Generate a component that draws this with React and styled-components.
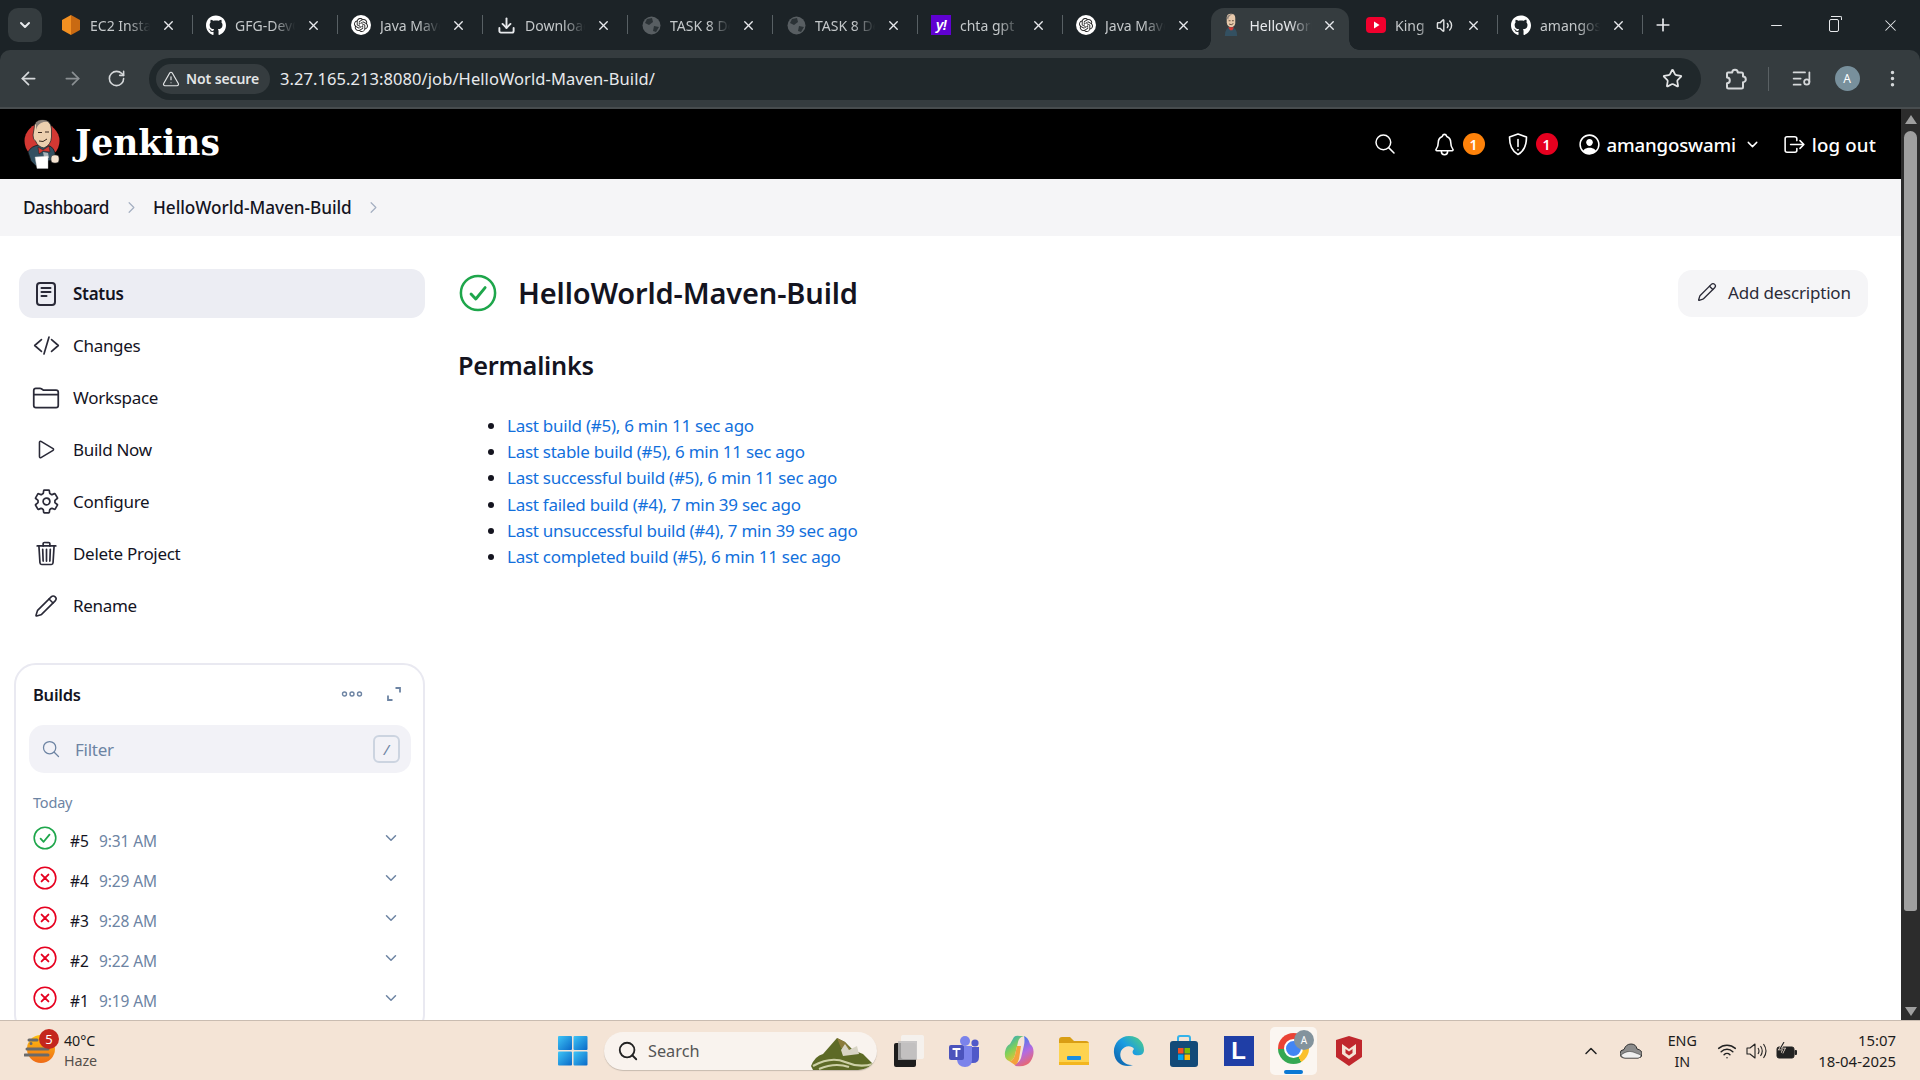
import React from "react";
import styled, { createGlobalStyle } from "styled-components";
import { ArrowLeft, ArrowRight, RotateCw, Star, ListMusic, EllipsisVertical, TriangleAlert, Plus, X, Minus, ChevronDown, ChevronRight, Search as SearchIcon, Volume2, Download, ChevronUp, Wifi, Pencil } from "lucide-react";
import { FaGithub } from "react-icons/fa";
import { SiOpenai } from "react-icons/si";
import { IoNotificationsOutline, IoPersonCircleOutline, IoLogOutOutline, IoSearchOutline, IoCodeSlashOutline, IoFolderOutline, IoPlayOutline, IoSettingsOutline, IoTrashOutline } from "react-icons/io5";

const UI = `"Noto Sans", "Open Sans", sans-serif`;

const Global = createGlobalStyle`
  html, body { margin: 0; padding: 0; background: #fff; }
  body { font-family: ${UI}; overflow: hidden; }
  * { box-sizing: border-box; }
`;

const Screen = styled.div`
  width: 1920px; height: 1080px; display: flex; flex-direction: column; overflow: hidden;
  background: #1c2327;
`;

/* ---------- tab strip ---------- */
const TabStrip = styled.div`
  height: 50px; flex: none; display: flex; align-items: flex-end; padding-left: 8px; color: #e3e5e6;
`;
const TabMenu = styled.div`
  width: 34px; height: 34px; margin: 0 5px 8px 0; border-radius: 10px; background: #353c3f;
  display: flex; align-items: center; justify-content: center; color: #e8eaed;
`;
const Tab = styled.div`
  width: ${p => (p.$active ? 138 : 145)}px; height: 42px; flex: none; display: flex; align-items: center; position: relative;
  margin: 0 ${p => (p.$active ? 3.5 : 0)}px;
  padding: 0 ${p => (p.$active ? 11 : 16)}px 8px ${p => (p.$active ? 10 : 14)}px;
  font-size: 14px; color: ${p => (p.$active ? "#e8eaed" : "#c4c8ca")};
  background: ${p => (p.$active ? "#353c3f" : "transparent")};
  border-radius: ${p => (p.$active ? "13px 13px 0 0" : "0")};
  &::after {
    content: ""; position: absolute; right: -1px; top: 7px; height: 19px; width: 1px;
    background: ${p => (p.$sep ? "#586064" : "transparent")};
    ${p => p.$active && `
      top: auto; bottom: 0; right: -10px; width: 10px; height: 10px;
      background: radial-gradient(circle at 100% 0, transparent 9.5px, #353c3f 10px);
    `}
  }
  &::before {
    content: "";
    ${p => p.$active && `
      position: absolute; bottom: 0; left: -10px; width: 10px; height: 10px;
      background: radial-gradient(circle at 0 0, transparent 9.5px, #353c3f 10px);
    `}
  }
`;
const FavSlot = styled.div`
  width: 20px; height: 20px; flex: none; margin-right: 9px; display: flex; align-items: center; justify-content: center;
`;
const TabLabel = styled.div`
  flex: 1; min-width: 0; white-space: nowrap; overflow: hidden;
  -webkit-mask-image: linear-gradient(to right, #000 60%, transparent 94%);
  mask-image: linear-gradient(to right, #000 60%, transparent 94%);
`;
const TabClose = styled.div`
  flex: none; width: 16px; height: 16px; margin-left: 6px; display: flex; align-items: center; justify-content: center; color: #e8eaed;
`;
const TabAudio = styled.div`
  flex: none; width: 18px; display: flex; color: #dfe1e2; margin-left: 2px; margin-right: 5px;
`;
const NewTab = styled.div`
  width: 22px; height: 42px; margin-left: 10px; padding-bottom: 8px; display: flex; align-items: center; justify-content: center; color: #e8eaed;
`;
const WindowControls = styled.div`
  margin-left: auto; display: flex; align-self: stretch; align-items: center; padding-right: 1px;
`;
const WindowBtn = styled.div`
  width: 57px; display: flex; justify-content: center; color: #e8eaed;
`;
const RestoreGlyph = styled.div`
  width: 10px; height: 13px; border: 1.5px solid #e8eaed; border-radius: 2px; position: relative;
  &::before { content: ""; position: absolute; left: 1px; top: -4px; width: 10px; height: 3px; border: 1.5px solid #e8eaed; border-bottom: 0; border-left: 0; border-radius: 0 2px 0 0; }
`;

/* ---------- toolbar ---------- */
const Toolbar = styled.div`
  height: 59px; flex: none; display: flex; align-items: center; padding-left: 6px;
  background: #353c3f; border-radius: 10px 10px 0 0; border-bottom: 2px solid #484d4f; color: #e3e5e6;
`;
const NavBtn = styled.div`
  width: 44px; height: 40px; flex: none; display: flex; align-items: center; justify-content: center;
  color: ${p => (p.$dim ? "#8b9093" : "#d5d8da")};
`;
const AddressBar = styled.div`
  width: 1552px; height: 42px; margin-left: 11px; flex: none; border-radius: 21px; background: #20282b;
  display: flex; align-items: center; padding: 0 18px 0 7px;
`;
const SecurityChip = styled.div`
  height: 30px; width: 114px; border-radius: 15px; background: #353c3f; display: flex; align-items: center; gap: 6px;
  padding-left: 6px; font-size: 14px; font-weight: 600; color: #e3e5e6; white-space: nowrap; letter-spacing: -0.1px;
`;
const Url = styled.div`
  margin-left: 10px; font-size: 16.5px; color: #e8eaed; white-space: nowrap; letter-spacing: 0.07px; flex: 1;
`;
const ToolRight = styled.div`
  display: flex; align-items: center; margin-left: 14px;
`;
const ToolBtn = styled.div`
  width: 40px; height: 40px; flex: none; display: flex; align-items: center; justify-content: center; color: #d5d8da;
  margin-left: ${p => p.$ml || 0}px;
`;
const ToolSep = styled.div`
  width: 1px; height: 24px; background: #5a6164; margin-left: 13px;
`;
const Avatar = styled.div`
  width: 25px; height: 25px; border-radius: 50%; background: #78909c; color: #fff; font-size: 12px;
  display: flex; align-items: center; justify-content: center;
`;

/* ---------- jenkins page ---------- */
const Viewport = styled.div`
  flex: 1; min-height: 0; display: flex; background: #fff; overflow: hidden;
`;
const Page = styled.div`
  flex: 1; min-width: 0; display: flex; flex-direction: column; color: #14141f;
`;
const Header = styled.div`
  height: 70px; flex: none; background: #000; color: #fff; display: flex; align-items: center; padding: 0 25px 0 23px;
`;
const Brand = styled.div`
  display: flex; align-items: center; gap: 14px;
`;
const BrandWord = styled.div`
  font-family: "DejaVu Serif", "Liberation Serif", serif; font-weight: 700; font-size: 34.5px; letter-spacing: 0; color: #fff; line-height: 1; margin-top: -2px;
`;
const HeaderActions = styled.div`
  margin-left: auto; display: flex; align-items: center; color: #fff;
`;
const HeaderIcon = styled.div`
  display: flex; align-items: center; justify-content: center; width: 26px; flex: none; margin-left: ${p => p.$ml || 0}px;
`;
const CountBadge = styled.div`
  width: 22px; height: 22px; border-radius: 50%; background: ${p => p.$bg}; color: #fff; font-size: 14px; font-weight: 600;
  display: flex; align-items: center; justify-content: center; margin-left: 5px; flex: none;
`;
const HeaderText = styled.div`
  font-size: 18.7px; font-weight: 500; margin-left: ${p => p.$ml || 0}px; white-space: nowrap; letter-spacing: ${p => p.$ls ?? -0.2}px;
`;
const Breadcrumbs = styled.div`
  height: 57px; flex: none; background: #f5f5f7; display: flex; align-items: center; padding-left: 23px; font-size: 17.2px; font-weight: 500;
`;
const Crumb = styled.div` white-space: nowrap; letter-spacing: ${p => p.$ls}px; `;
const CrumbSep = styled.div`
  width: 44px; display: flex; justify-content: center; color: #a4afc1; flex: none;
`;
const Body = styled.div`
  flex: 1; min-height: 0; display: flex; padding: 33px 33px 0 14px; gap: 33px;
`;
const Side = styled.div`
  width: 411px; flex: none; display: flex; flex-direction: column;
`;
const Nav = styled.div`
  display: flex; flex-direction: column; gap: 3px; padding-left: 5px;
`;
const NavItem = styled.div`
  height: 49px; border-radius: 14px; display: flex; align-items: center; font-size: 17px; letter-spacing: -0.3px;
  font-weight: ${p => (p.$active ? 600 : 400)}; background: ${p => (p.$active ? "#ecedf3" : "transparent")};
  color: #14141f;
`;
const NavGlyph = styled.div`
  width: 54px; flex: none; display: flex; justify-content: center; color: #2a2a38;
`;
const BuildsCard = styled.div`
  margin-top: 33px; flex: none; border: 2px solid #e9e9f1; border-radius: 22px; padding: 0 12px 14px 13px;
`;
const CardHead = styled.div`
  height: 60px; display: flex; align-items: center; padding: 0 9px 2px 4px;
`;
const CardTitle = styled.div`
  font-size: 16.5px; font-weight: 600; flex: 1; letter-spacing: -0.25px;
`;
const CardTools = styled.div`
  display: flex; align-items: center; gap: 23px; color: #6d84a3;
`;
const FilterBox = styled.div`
  height: 48px; border-radius: 15px; background: #f2f2f7; display: flex; align-items: center; padding: 0 10px 0 12px; color: #6d84a3;
`;
const FilterText = styled.div`
  margin-left: 14px; flex: 1; font-size: 17px; color: #6d84a3; letter-spacing: -0.25px;
`;
const KeyHint = styled.div`
  width: 27px; height: 28px; border: 2px solid #ccd4e0; border-radius: 6px; display: flex; align-items: center; justify-content: center;
  font-size: 15px; color: #6d84a3; font-style: italic; margin-right: 1px;
`;
const DayLabel = styled.div`
  margin: 18px 0 0 4px; height: 22px; font-size: 14.5px; color: #6d84a3; display: flex; align-items: center; letter-spacing: -0.2px;
`;
const BuildList = styled.div`
  margin-top: 7px; display: flex; flex-direction: column; padding: 0 4px 0 4px;
`;
const BuildRow = styled.div`
  height: 40px; display: flex; align-items: center; font-size: 15.5px;
`;
const BuildIcon = styled.div`
  width: 26px; flex: none; display: flex; position: relative; top: -2px;
`;
const BuildNum = styled.div`
  margin-left: 11px; width: 29px; flex: none; color: #14141f; padding-top: 2px;
`;
const BuildTime = styled.div`
  color: #6d84a3; flex: 1; padding-top: 2px; letter-spacing: -0.1px;
`;
const BuildChevron = styled.div`
  color: #6d84a3; display: flex; position: relative; top: -2px; margin-right: 7px;
`;
const Main = styled.div`
  flex: 1; min-width: 0; display: flex; flex-direction: column;
`;
const TitleRow = styled.div`
  height: 48px; display: flex; align-items: center; padding-left: 1px;
`;
const Title = styled.h1`
  margin: 0 0 2px 21px; font-size: 29px; font-weight: 600; letter-spacing: -0.15px; color: #14141f;
`;
const AddDescription = styled.div`
  margin-left: auto; width: 190px; height: 47px; background: #f5f5f7; border-radius: 14px; display: flex; align-items: center; padding: 0 0 2px 19px;
  font-size: 17px; font-weight: 400; gap: 11px; color: #2b2b38; letter-spacing: -0.2px;
`;
const SectionTitle = styled.h2`
  margin: 29px 0 0; font-size: 25.3px; line-height: 38px; font-weight: 600; letter-spacing: -0.25px;
`;
const LinkList = styled.ul`
  margin: 29px 0 0; padding-left: 49px;
`;
const LinkItem = styled.li`
  height: 26.2px; line-height: 26.2px; font-size: 17px; letter-spacing: -0.26px; color: #14141f;
`;
const PermaLink = styled.a`
  color: #1270dc; text-decoration: none;
`;
const Scrollbar = styled.div`
  width: 19px; flex: none; background: #2c2c2c; display: flex; flex-direction: column; align-items: center; padding: 6px 0 4px;
`;
const ScrollArrow = styled.div`
  width: 0; height: 0; border-left: 6px solid transparent; border-right: 6px solid transparent;
  ${p => (p.$up ? "border-bottom: 9px solid #9f9f9f;" : "border-top: 9px solid #9f9f9f;")}
  flex: none;
`;
const ScrollThumb = styled.div`
  width: 13px; height: 780px; border-radius: 7px 7px 3px 3px; background: #9f9f9f; margin-top: 7px;
`;
const ScrollSpace = styled.div` flex: 1; `;

/* ---------- taskbar ---------- */
const Taskbar = styled.div`
  height: 60px; flex: none; background: #f4e4d6; border-top: 1px solid #c9bcb1; display: flex; align-items: center; position: relative; color: #1c1c1c;
`;
const Weather = styled.div`
  width: 558px; flex: none; display: flex; align-items: center; padding-left: 24px;
`;
const WeatherIcon = styled.div`
  width: 40px; height: 44px; flex: none; position: relative;
`;
const WeatherBadge = styled.div`
  position: absolute; left: 15px; top: 0; width: 20px; height: 20px; border-radius: 50%; background: #c4261d; color: #fff;
  font-size: 13px; display: flex; align-items: center; justify-content: center;
`;
const WeatherText = styled.div`
  font-size: 14.3px; line-height: 20px; letter-spacing: -0.1px;
`;
const Muted = styled.div` color: #55504b; `;
const StartGlyph = styled.div`
  width: 30px; flex: none; display: flex;
`;
const TaskSearch = styled.div`
  width: 273px; height: 38px; margin-left: 16px; flex: none; border-radius: 19px; background: #f9f3ee; box-shadow: 0 1px 1px #c7bbb0;
  display: flex; align-items: center; padding-left: 13px; font-size: 16.3px; color: #555; gap: 9px; position: relative; overflow: hidden;
`;
const SearchArt = styled.div`
  position: absolute; right: 2px; bottom: 0; display: flex;
`;
const Dock = styled.div`
  display: flex; align-items: center; margin-left: 4px; flex: none;
`;
const DockItem = styled.div`
  width: 55px; height: 50px; flex: none; display: flex; align-items: center; justify-content: center; position: relative;
`;
const DockActive = styled.div`
  width: 47px; height: 48px; border-radius: 5px; background: #fbf6f1; display: flex; align-items: center; justify-content: center; position: relative;
  &::after { content: ""; position: absolute; bottom: 1px; left: 14px; width: 19px; height: 4px; border-radius: 2px; background: #0a78d4; }
`;
const LBox = styled.div`
  width: 30px; height: 30px; background: #1f3ea6; color: #fff; font-family: "Liberation Sans", sans-serif; font-weight: 700; font-size: 24px;
  display: flex; align-items: center; justify-content: center;
`;
const ChromeBall = styled.div`
  width: 31px; height: 31px; border-radius: 50%; margin-top: -4px; display: flex; align-items: center; justify-content: center;
  background: conic-gradient(from 30deg, #fbc02d 0 120deg, #34a853 120deg 240deg, #ea4335 240deg 360deg);
  &::before { content: ""; width: 15px; height: 15px; border-radius: 50%; background: #4285f4; border: 2px solid #fff; }
`;
const ChromeProfile = styled.div`
  position: absolute; top: 3px; right: 3px; width: 20px; height: 20px; border-radius: 50%; background: #83939d; color: #fff; font-size: 10px;
  display: flex; align-items: center; justify-content: center;
`;
const Tray = styled.div`
  margin-left: auto; display: flex; align-items: center; padding-right: 24px; flex: none;
`;
const TrayIcon = styled.div`
  display: flex; justify-content: center; width: ${p => p.$w || 30}px; flex: none; margin-left: ${p => p.$ml || 0}px; color: #222;
`;
const TrayLang = styled.div`
  margin-left: 11px; width: 50px; text-align: center; font-size: 14.3px; line-height: 21px;
`;
const Clock = styled.div`
  margin-left: 16px; text-align: right; font-size: 14.9px; line-height: 21px; white-space: nowrap;
`;

/* ---------- drawings ---------- */
const JenkinsLogo = () => (
  <svg width="38" height="50" viewBox="0 0 38 50">
    <circle cx="19" cy="22" r="17.5" fill="#d33833" />
    <path d="M5 33 Q8 27 16 26 L27 27 Q31 29 32 34 L32 41 L24 42 L13 47 L8 42 Z" fill="#335061" stroke="#111" strokeWidth=".7" />
    <path d="M11 10 Q11 1 19.5 1 Q28 1 28.5 10 L28.5 18 Q28 26 21 29 Q15 28 12.5 22 Q10 21 10 16 Z" fill="#eccfae" stroke="#2a2a2a" strokeWidth=".8" />
    <path d="M13 3.5 Q19 -1 26 3 Q22 2 18 4 Q14 6 13 11 Z" fill="#8a8079" />
    <path d="M16 22 Q20 24 24 20" stroke="#3a2a20" strokeWidth="1" fill="none" />
    <path d="M15 13.5h4M22 13h4" stroke="#3a2a20" strokeWidth="1.1" />
    <path d="M15 28 L20 31 L26 27 L27 33 L20 32 L16 35 Z" fill="#d33833" stroke="#111" strokeWidth=".4" />
    <path d="M20 33 L25 34 L26 39 L21 38 Z" fill="#a8b4bb" />
    <path d="M12 38 L25 37 L25 49.5 L14 49.5 Z" fill="#fff" stroke="#bbb" strokeWidth=".4" />
    <rect x="28" y="36" width="8" height="8" rx="3" fill="#f4e3d0" stroke="#333" strokeWidth=".6" />
  </svg>
);
const StatusDoc = () => (
  <svg width="24" height="26" viewBox="0 0 24 26" fill="none" stroke="#2a2a38" strokeWidth="2" strokeLinecap="round">
    <rect x="3" y="2" width="18" height="22" rx="3" />
    <path d="M7.5 7h9M7.5 11h9M7.5 15h5" />
  </svg>
);
const StatusCircle = ({ size, ok }) => {
  const c = ok ? "#1ea64b" : "#e6001f";
  return (
    <svg width={size} height={size} viewBox="0 0 24 24" fill="none" stroke={c} strokeLinecap="round" strokeLinejoin="round">
      <circle cx="12" cy="12" r="10.8" strokeWidth="1.6" />
      {ok ? <path d="M7.6 12.6 L10.6 15.8 L16.5 8.6" strokeWidth="1.8" /> : <path d="M8.6 8.6 L15.4 15.4 M15.4 8.6 L8.6 15.4" strokeWidth="1.9" />}
    </svg>
  );
};
const ExpandGlyph = () => (
  <svg width="16" height="16" viewBox="0 0 16 16" fill="none" stroke="#6d84a3" strokeWidth="1.8">
    <path d="M9.5 2H14V6.5M6.5 14H2V9.5" />
  </svg>
);
const DotsGlyph = () => (
  <svg width="22" height="8" viewBox="0 0 22 8" fill="none" stroke="#6d84a3" strokeWidth="1.4">
    <circle cx="3.5" cy="4" r="2" /><circle cx="11" cy="4" r="2" /><circle cx="18.5" cy="4" r="2" />
  </svg>
);
const ShieldGlyph = () => (
  <svg width="24" height="24" viewBox="0 0 24 24" fill="none" stroke="#fff" strokeWidth="1.6" strokeLinejoin="round" strokeLinecap="round">
    <path d="M12 2 L20.5 5 Q20.5 18 12 22.5 Q3.5 18 3.5 5 Z" />
    <path d="M12 7.5v7M12 17.5v.4" />
  </svg>
);
const ExtensionGlyph = () => (
  <svg width="24" height="24" viewBox="0 0 24 24" fill="none" stroke="#d5d8da" strokeWidth="2" strokeLinejoin="round">
    <path d="M5 5.5 H9.2 A2.8 2.8 0 0 1 14.8 5.5 H18.5 A1.5 1.5 0 0 1 20 7 V9.6 A2.8 2.8 0 0 1 20 15.2 V20 A1.5 1.5 0 0 1 18.5 21.5 H5.5 A1.5 1.5 0 0 1 4 20 V16.2 A2.8 2.8 0 0 0 4 10.6 V6.5 A1 1 0 0 1 5 5.5 Z" />
  </svg>
);
const AwsFav = () => (
  <svg width="20" height="22" viewBox="0 0 20 22">
    <path d="M10 1 L19 6 V16 L10 21 Z" fill="#c96a12" />
    <path d="M10 1 L1 6 V16 L10 21 Z" fill="#f39021" />
  </svg>
);
const GlobeFav = () => (
  <svg width="19" height="19" viewBox="0 0 19 19">
    <circle cx="9.5" cy="9.5" r="9" fill="#585e62" />
    <path d="M5 3 L10 2 L11 6 L7 9 L3 7 Z M12 10 L17 11 L14 16 L11 15 Z" fill="#2b3236" />
  </svg>
);
const OpenAiFav = () => (
  <FavDisc><SiOpenai size={14} color="#222" /></FavDisc>
);
const FavDisc = styled.div`
  width: 20px; height: 20px; border-radius: 50%; background: #fff; display: flex; align-items: center; justify-content: center;
`;
const YahooFav = styled.div`
  width: 20px; height: 20px; background: #6001d2; color: #fff; font-size: 14px; font-weight: 700; font-family: "Liberation Sans", sans-serif; font-style: italic;
  display: flex; align-items: center; justify-content: center; letter-spacing: -1px;
`;
const YoutubeFav = () => (
  <svg width="20" height="16" viewBox="0 0 20 16">
    <rect width="20" height="16" rx="4" fill="#f1002d" /><path d="M8 4.5 L13.5 8 L8 11.5 Z" fill="#fff" />
  </svg>
);
const JenkinsFav = () => (
  <svg width="18" height="24" viewBox="0 0 38 50">
    <path d="M6 48 Q6 30 19 29 Q32 30 32 48 Z" fill="#335061" />
    <path d="M10 9 Q10 1 19 1 Q28 1 28 10 L28 22 Q26 30 19 30 Q11 28 10 20 Z" fill="#e7c9ab" />
    <path d="M10 10 Q12 2 24 2 Q14 4 13 14 Z" fill="#8a8079" />
    <path d="M14 16h4M21 16h4M15 23q5 3 9-1" stroke="#3a2a20" strokeWidth="1.6" fill="none" />
    <path d="M13 30 L25 30 L22 36 L17 36 Z" fill="#d33833" />
  </svg>
);
const WeatherArt = () => (
  <svg width="36" height="36" viewBox="0 0 36 36">
    <defs><linearGradient id="sun" x1="0" y1="0" x2="0" y2="1"><stop offset="0" stopColor="#ffc20e" /><stop offset="1" stopColor="#ee6a16" /></linearGradient></defs>
    <circle cx="17" cy="20" r="14" fill="url(#sun)" />
    <path d="M5 11h8M3 20h21M1 26h23M7 14.5h0" stroke="#6a6a6a" strokeWidth="3" strokeLinecap="round" />
  </svg>
);
const WinLogo = () => (
  <svg width="30" height="30" viewBox="0 0 30 30">
    <defs><linearGradient id="win" x1="0" y1="0" x2="1" y2="1"><stop offset="0" stopColor="#3ec5f6" /><stop offset="1" stopColor="#0a69c8" /></linearGradient></defs>
    <rect x="0" y="0" width="14" height="14" rx="1" fill="url(#win)" /><rect x="15.5" y="0" width="14" height="14" rx="1" fill="url(#win)" />
    <rect x="0" y="15.5" width="14" height="14" rx="1" fill="url(#win)" /><rect x="15.5" y="15.5" width="14" height="14" rx="1" fill="url(#win)" />
  </svg>
);
const MountainArt = () => (
  <svg width="64" height="34" viewBox="0 0 64 34">
    <path d="M0 30 Q4 20 12 18 L26 2 L34 6 L42 14 L52 18 L62 28 L64 34 L2 34 Z" fill="#5d6a26" />
    <path d="M26 2 L34 6 L40 14 L30 12 Z" fill="#8b7b3a" />
    <path d="M30 14 L34 8 L38 14 L46 10 L48 18 L32 20 Z" fill="#d8d4c4" />
    <path d="M2 30 Q20 20 34 26 T62 28" stroke="#cdd0a6" strokeWidth="2.2" fill="none" />
    <path d="M8 33 Q24 26 38 31" stroke="#cdd0a6" strokeWidth="2" fill="none" />
  </svg>
);
const CardsGlyph = () => (
  <svg width="32" height="32" viewBox="0 0 32 32">
    <rect x="1" y="8" width="22" height="24" rx="2" fill="#1d1d1d" />
    <rect x="8" y="0" width="23" height="24" rx="2" fill="#f5f3f1" opacity=".85" />
    <rect x="5" y="6" width="19" height="19" fill="#bdbcbb" opacity=".8" />
  </svg>
);
const TeamsGlyph = () => (
  <svg width="32" height="32" viewBox="0 0 32 32">
    <circle cx="17" cy="6" r="5" fill="#7b83eb" /><circle cx="27" cy="8" r="3.6" fill="#5059c9" />
    <path d="M21 12h10v10q0 6-6 6h-4z" fill="#5059c9" /><path d="M9 11h15v14q0 7-7 7t-8-7z" fill="#7b83eb" />
    <rect x="1" y="10" width="15" height="15" rx="2" fill="#4b53bc" />
    <path d="M4.5 14h8M8.5 14v8" stroke="#fff" strokeWidth="1.8" />
  </svg>
);
const CopilotGlyph = () => (
  <svg width="30" height="32" viewBox="0 0 30 32">
    <defs>
      <linearGradient id="co1" x1="0" y1="0" x2="0.6" y2="1"><stop offset="0" stopColor="#1b9de2" /><stop offset=".55" stopColor="#7fd05a" /><stop offset="1" stopColor="#f6c12c" /></linearGradient>
      <linearGradient id="co2" x1="0.3" y1="0" x2="0.7" y2="1"><stop offset="0" stopColor="#2f7df0" /><stop offset=".55" stopColor="#b46ae0" /><stop offset="1" stopColor="#f2685c" /></linearGradient>
    </defs>
    <path d="M10 2 Q12 0 16 1 L20 1 Q15 2 14 7 L11 20 Q9 27 5 26 Q0 24 1 17 Q2 11 6 9 Z" fill="url(#co1)" />
    <path d="M20 1 Q24 2 26 9 Q31 13 29 21 Q27 28 22 30 Q18 32 12 31 Q10 30 11 29 Q15 28 17 23 L20 10 Q21 5 20 1 Z" fill="url(#co2)" />
    <path d="M5 26 Q9 27 11 20 L13 11 L17 11 L15 24 Q13 30 11 30 Z" fill="#f4a13c" />
  </svg>
);
const FolderGlyph = () => (
  <svg width="30" height="28" viewBox="0 0 30 28">
    <path d="M0 3q0-3 3-3h8l4 4h12q3 0 3 3v3H0z" fill="#d99e14" />
    <path d="M0 6h30v20q0 2-2 2H2q-2 0-2-2z" fill="#fdd34f" />
    <rect x="8" y="19" width="14" height="4" rx="1" fill="#1b8ee0" /><rect x="0" y="25" width="30" height="3" fill="#f3b61f" />
  </svg>
);
const EdgeGlyph = () => (
  <svg width="32" height="32" viewBox="0 0 32 32">
    <defs><linearGradient id="ed" x1="0" y1="1" x2="1" y2="0"><stop offset="0" stopColor="#0c59a4" /><stop offset=".55" stopColor="#1b9de2" /><stop offset="1" stopColor="#55d47a" /></linearGradient></defs>
    <path d="M16 1 C26 1 31 8 31 15 C31 20 26 21 22 20 C19 19 19 16 21 14 C19 10 11 10 8 16 C5 24 12 31 20 30 C12 33 2 29 1 18 C0 9 7 1 16 1 Z" fill="url(#ed)" />
  </svg>
);
const StoreGlyph = () => (
  <svg width="30" height="32" viewBox="0 0 30 32">
    <path d="M9 7V3q0-2 2-2h8q2 0 2 2v4" fill="none" stroke="#35b3ea" strokeWidth="2" />
    <rect x="1" y="6" width="28" height="26" rx="3" fill="#134a78" />
    <rect x="9" y="13" width="5.5" height="5.5" fill="#f25022" /><rect x="15.5" y="13" width="5.5" height="5.5" fill="#7fba00" />
    <rect x="9" y="19.5" width="5.5" height="5.5" fill="#00a4ef" /><rect x="15.5" y="19.5" width="5.5" height="5.5" fill="#ffb900" />
  </svg>
);
const McAfeeGlyph = () => (
  <svg width="28" height="30" viewBox="0 0 28 30">
    <path d="M1 4 L14 0 L27 4 V21 L14 30 L1 21 Z" fill="#c0272d" />
    <path d="M7 8 L14 13 L21 8 V18 L14 23 L7 18 Z" fill="#f4e4d6" />
    <path d="M10.5 13 L14 15.5 L17.5 13 V17 L14 19.5 L10.5 17 Z" fill="#c0272d" />
  </svg>
);
const CloudGlyph = () => (
  <svg width="22" height="16" viewBox="0 0 22 16">
    <path d="M5 15 Q0 15 0 10.5 Q0 7 4 6.5 Q6 1 11 1 Q16 1 17 6 Q22 7 22 11 Q22 15 18 15 Z" fill="#8c8c8c" stroke="#333" strokeWidth="1" />
    <path d="M1 12 Q7 7 13 9 L21 12 Q21 15 18 15 H5 Q2 15 1 12 Z" fill="#f0f0f0" stroke="#333" strokeWidth=".5" />
  </svg>
);
const BatteryGlyph = () => (
  <svg width="22" height="18" viewBox="0 0 22 18" fill="none">
    <rect x="1" y="5" width="17" height="11" rx="2" fill="#222" stroke="#222" />
    <rect x="18.5" y="8" width="2.5" height="5" rx="1" fill="#222" />
    <path d="M8 0 L4 7 H8 L6 11" stroke="#f4e4d6" strokeWidth="2.6" />
    <path d="M8 0 L4 7 H8 L6 11" stroke="#222" strokeWidth="1.1" />
  </svg>
);
const SpeakerGlyph = () => (
  <svg width="22" height="18" viewBox="0 0 22 18" fill="none" stroke="#222" strokeWidth="1.1" strokeLinejoin="round">
    <path d="M1 6h3l5-4v14l-5-4H1z" />
    <path d="M12 6q2 3 0 6M14.5 4q3.5 5 0 10M17.5 2q5 7 0 14" />
  </svg>
);

const tabs = [
  { k: "aws", label: "EC2 Instances", sep: true },
  { k: "gh", label: "GFG-DevOps", sep: true },
  { k: "ai", label: "Java Maven", sep: true },
  { k: "dl", label: "Downloads", sep: true },
  { k: "globe", label: "TASK 8 DevOps", sep: true },
  { k: "globe", label: "TASK 8 DevOps", sep: true },
  { k: "y", label: "chta gpt", sep: true },
  { k: "ai", label: "Java Maven" },
  { k: "jk", label: "HelloWorld", active: true },
  { k: "yt", label: "King", audio: true, sep: true },
  { k: "gh", label: "amangoswami", sep: true },
];
const Fav = ({ k }) => {
  if (k === "aws") return <AwsFav />;
  if (k === "gh") return <FaGithub size={21} color="#fff" />;
  if (k === "ai") return <OpenAiFav />;
  if (k === "dl") return <Download size={19} color="#e8eaed" strokeWidth={2.4} />;
  if (k === "globe") return <GlobeFav />;
  if (k === "y") return <YahooFav>y!</YahooFav>;
  if (k === "jk") return <JenkinsFav />;
  return <YoutubeFav />;
};

const navItems = [
  { label: "Status", icon: <StatusDoc />, active: true },
  { label: "Changes", icon: <IoCodeSlashOutline size={27} /> },
  { label: "Workspace", icon: <IoFolderOutline size={28} /> },
  { label: "Build Now", icon: <IoPlayOutline size={25} /> },
  { label: "Configure", icon: <IoSettingsOutline size={27} /> },
  { label: "Delete Project", icon: <IoTrashOutline size={27} /> },
  { label: "Rename", icon: <Pencil size={24} strokeWidth={1.6} /> },
];
const builds = [
  { n: "#5", t: "9:31 AM", ok: true },
  { n: "#4", t: "9:29 AM" },
  { n: "#3", t: "9:28 AM" },
  { n: "#2", t: "9:22 AM" },
  { n: "#1", t: "9:19 AM" },
];
const links = [
  "Last build (#5), 6 min 11 sec ago",
  "Last stable build (#5), 6 min 11 sec ago",
  "Last successful build (#5), 6 min 11 sec ago",
  "Last failed build (#4), 7 min 39 sec ago",
  "Last unsuccessful build (#4), 7 min 39 sec ago",
  "Last completed build (#5), 6 min 11 sec ago",
];

export default function App() {
  return (
    <Screen>
      <Global />
      <TabStrip>
        <TabMenu><ChevronDown size={16} strokeWidth={3} /></TabMenu>
        {tabs.map((t, i) => (
          <Tab key={i} $active={t.active} $sep={t.sep}>
            <FavSlot><Fav k={t.k} /></FavSlot>
            <TabLabel>{t.label}</TabLabel>
            {t.audio && <TabAudio><Volume2 size={17} /></TabAudio>}
            <TabClose><X size={15} strokeWidth={2.2} /></TabClose>
          </Tab>
        ))}
        <NewTab><Plus size={20} /></NewTab>
        <WindowControls>
          <WindowBtn><Minus size={17} strokeWidth={1.4} /></WindowBtn>
          <WindowBtn><RestoreGlyph /></WindowBtn>
          <WindowBtn><X size={19} strokeWidth={1.3} /></WindowBtn>
        </WindowControls>
      </TabStrip>
      <Toolbar>
        <NavBtn><ArrowLeft size={21} /></NavBtn>
        <NavBtn $dim><ArrowRight size={21} /></NavBtn>
        <NavBtn><RotateCw size={19} /></NavBtn>
        <AddressBar>
          <SecurityChip><TriangleAlert size={18} strokeWidth={1.6} />Not secure</SecurityChip>
          <Url>3.27.165.213:8080/job/HelloWorld-Maven-Build/</Url>
          <Star size={21} color="#e3e5e6" strokeWidth={2} />
        </AddressBar>
        <ToolRight>
          <ToolBtn><ExtensionGlyph /></ToolBtn>
          <ToolSep />
          <ToolBtn $ml={12}><ListMusic size={21} /></ToolBtn>
          <ToolBtn $ml={6}><Avatar>A</Avatar></ToolBtn>
          <ToolBtn $ml={5}><EllipsisVertical size={21} /></ToolBtn>
        </ToolRight>
      </Toolbar>
      <Viewport>
        <Page>
          <Header>
            <Brand>
              <JenkinsLogo />
              <BrandWord>Jenkins</BrandWord>
            </Brand>
            <HeaderActions>
              <HeaderIcon><IoSearchOutline size={24} /></HeaderIcon>
              <HeaderIcon $ml={34}><IoNotificationsOutline size={25} /></HeaderIcon>
              <CountBadge $bg="#fe820a">1</CountBadge>
              <HeaderIcon $ml={20}><ShieldGlyph /></HeaderIcon>
              <CountBadge $bg="#e6001f">1</CountBadge>
              <HeaderIcon $ml={19}><IoPersonCircleOutline size={25} /></HeaderIcon>
              <HeaderText $ml={4}>amangoswami</HeaderText>
              <HeaderIcon $ml={4}><ChevronDown size={17} /></HeaderIcon>
              <HeaderIcon $ml={16}><IoLogOutOutline size={25} /></HeaderIcon>
              <HeaderText $ml={4} $ls={0.15}>log out</HeaderText>
            </HeaderActions>
          </Header>
          <Breadcrumbs>
            <Crumb $ls={-0.45}>Dashboard</Crumb>
            <CrumbSep><ChevronRight size={19} strokeWidth={1.5} /></CrumbSep>
            <Crumb $ls={-0.05}>HelloWorld-Maven-Build</Crumb>
            <CrumbSep><ChevronRight size={19} strokeWidth={1.5} /></CrumbSep>
          </Breadcrumbs>
          <Body>
            <Side>
              <Nav>
                {navItems.map(n => (
                  <NavItem key={n.label} $active={n.active}>
                    <NavGlyph>{n.icon}</NavGlyph>
                    {n.label}
                  </NavItem>
                ))}
              </Nav>
              <BuildsCard>
                <CardHead>
                  <CardTitle>Builds</CardTitle>
                  <CardTools><DotsGlyph /><ExpandGlyph /></CardTools>
                </CardHead>
                <FilterBox>
                  <IoSearchOutline size={20} />
                  <FilterText>Filter</FilterText>
                  <KeyHint>/</KeyHint>
                </FilterBox>
                <DayLabel>Today</DayLabel>
                <BuildList>
                  {builds.map(b => (
                    <BuildRow key={b.n}>
                      <BuildIcon><StatusCircle size={24} ok={b.ok} /></BuildIcon>
                      <BuildNum>{b.n}</BuildNum>
                      <BuildTime>{b.t}</BuildTime>
                      <BuildChevron><ChevronDown size={18} strokeWidth={2} /></BuildChevron>
                    </BuildRow>
                  ))}
                </BuildList>
              </BuildsCard>
            </Side>
            <Main>
              <TitleRow>
                <StatusCircle size={38} ok />
                <Title>HelloWorld-Maven-Build</Title>
                <AddDescription><Pencil size={20} strokeWidth={1.6} />Add description</AddDescription>
              </TitleRow>
              <SectionTitle>Permalinks</SectionTitle>
              <LinkList>
                {links.map(l => (
                  <LinkItem key={l}><PermaLink href="#">{l}</PermaLink></LinkItem>
                ))}
              </LinkList>
            </Main>
          </Body>
        </Page>
        <Scrollbar>
          <ScrollArrow $up />
          <ScrollThumb />
          <ScrollSpace />
          <ScrollArrow />
        </Scrollbar>
      </Viewport>
      <Taskbar>
        <Weather>
          <WeatherIcon>
            <WeatherArt />
            <WeatherBadge>5</WeatherBadge>
          </WeatherIcon>
          <WeatherText>40°C<Muted>Haze</Muted></WeatherText>
        </Weather>
        <StartGlyph><WinLogo /></StartGlyph>
        <TaskSearch>
          <SearchIcon size={22} color="#222" />Search
          <SearchArt><MountainArt /></SearchArt>
        </TaskSearch>
        <Dock>
          <DockItem><CardsGlyph /></DockItem>
          <DockItem><TeamsGlyph /></DockItem>
          <DockItem><CopilotGlyph /></DockItem>
          <DockItem><FolderGlyph /></DockItem>
          <DockItem><EdgeGlyph /></DockItem>
          <DockItem><StoreGlyph /></DockItem>
          <DockItem><LBox>L</LBox></DockItem>
          <DockItem><DockActive><ChromeBall /><ChromeProfile>A</ChromeProfile></DockActive></DockItem>
          <DockItem><McAfeeGlyph /></DockItem>
        </Dock>
        <Tray>
          <TrayIcon><ChevronUp size={20} strokeWidth={1.8} /></TrayIcon>
          <TrayIcon $ml={10}><CloudGlyph /></TrayIcon>
          <TrayLang>ENG<br />IN</TrayLang>
          <TrayIcon $ml={5}><Wifi size={20} strokeWidth={1.8} /></TrayIcon>
          <TrayIcon><SpeakerGlyph /></TrayIcon>
          <TrayIcon><BatteryGlyph /></TrayIcon>
          <Clock>15:07<br />18-04-2025</Clock>
        </Tray>
      </Taskbar>
    </Screen>
  );
}
